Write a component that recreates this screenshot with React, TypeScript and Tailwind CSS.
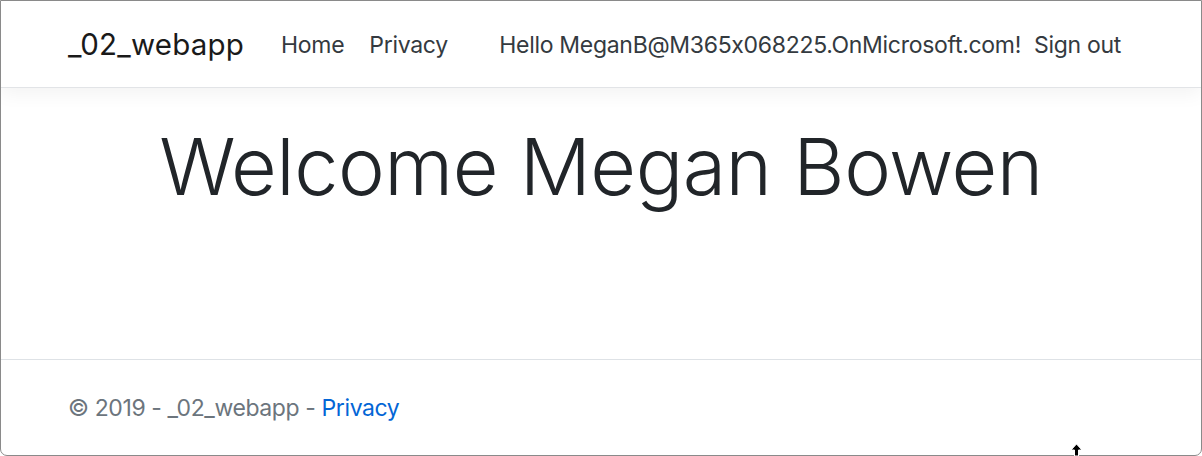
import React from "react";

const font = { fontFamily: '"Inter", "Liberation Sans", Arial, sans-serif' };

function Header() {
  return (
    <header className="h-[87px] shrink-0 flex items-center bg-white border-b border-[#e2e4e7] shadow-[0_6px_18px_rgba(0,0,0,0.05)] relative z-10">
      <div className="flex items-center w-full pl-[67px] pr-[80px] pt-[2px]">
        <a className="text-[29.5px] leading-none tracking-[0.2px] text-[#1a1a1a] mr-[37px]">_02_webapp</a>
        <nav className="flex items-center flex-1">
          <a className="text-[23px] leading-none text-[#343a40] tracking-[-0.3px]">Home</a>
          <a className="text-[23px] leading-none text-[#343a40] tracking-[-0.3px] ml-[25px]">Privacy</a>
          <div className="flex items-center ml-auto">
            <span className="text-[23px] leading-none text-[#343a40] tracking-[-0.3px]">
              Hello MeganB@M365x068225.OnMicrosoft.com!
            </span>
            <a className="text-[23px] leading-none text-[#343a40] tracking-[-0.3px] ml-[13px]">Sign out</a>
          </div>
        </nav>
      </div>
    </header>
  );
}

export default function App() {
  return (
    <div style={font} className="w-[1202px] h-[456px] bg-white overflow-hidden relative">
      <div className="h-full flex flex-col border border-[#8a8a8a] rounded-b-[7px] overflow-hidden">
        <Header />
        <main className="flex-1 flex justify-center pt-[31px]">
          <h1 className="text-[79px] leading-[1.2] font-light text-[#212529] tracking-[-0.5px]">
            Welcome Megan Bowen
          </h1>
        </main>
        <footer className="h-[96px] shrink-0 border-t border-[#dee2e6] flex items-center pl-[67px] pt-[2px]">
          <span className="text-[23px] text-[#6c757d] tracking-[-0.4px]">
            © 2019 - _02_webapp - <a className="text-[#0366d6]">Privacy</a>
          </span>
        </footer>
      </div>
      <svg className="absolute left-[1069px] top-[443px]" width="15" height="13" viewBox="0 0 15 13">
        <path d="M7.5 1 L13 7 L9.5 7 L9.5 13 L5.5 13 L5.5 7 L2 7 Z" fill="#000" stroke="#fff" strokeWidth="1" />
      </svg>
    </div>
  );
}
